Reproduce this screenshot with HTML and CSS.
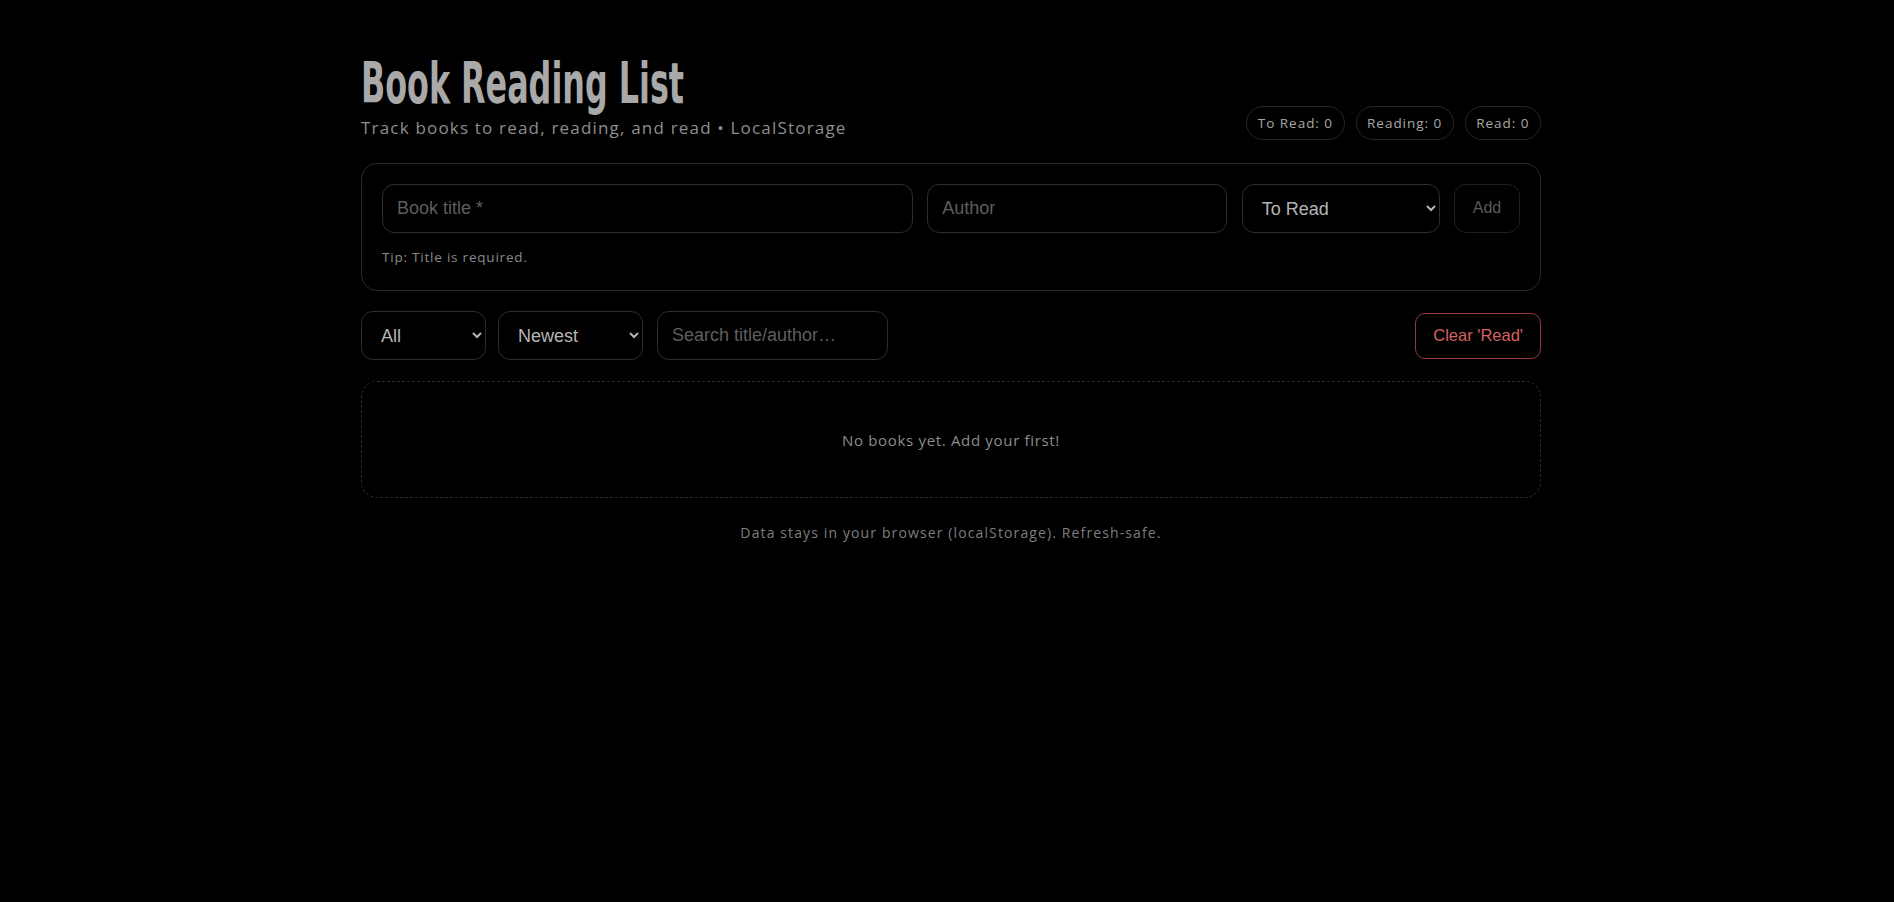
FILE: index.html
```html
<!DOCTYPE html>
<html lang="en">
<head>
<meta charset="utf-8">
<title>Book Reading List</title>
<link rel="stylesheet" href="styles.css">
</head>
<body>
<main class="wrap">
  <header class="top">
    <div class="brand">
      <h1 class="title">Book Reading List</h1>
      <p class="sub">Track books to read, reading, and read • LocalStorage</p>
    </div>
    <div class="stats">
      <span class="pill">To Read: 0</span>
      <span class="pill">Reading: 0</span>
      <span class="pill">Read: 0</span>
    </div>
  </header>

  <section class="card">
    <form class="addrow">
      <input class="field" type="text" placeholder="Book title *">
      <input class="field" type="text" placeholder="Author">
      <select class="field sel">
        <option>To Read</option>
        <option>Reading</option>
        <option>Read</option>
      </select>
      <button class="addbtn" type="button">Add</button>
    </form>
    <p class="tip">Tip: Title is required.</p>
  </section>

  <section class="filters">
    <select class="field sel f-all">
      <option>All</option>
    </select>
    <select class="field sel f-sort">
      <option>Newest</option>
    </select>
    <input class="field f-search" type="text" placeholder="Search title/author…">
    <button class="clear" type="button">Clear 'Read'</button>
  </section>

  <section class="empty">No books yet. Add your first!</section>

  <p class="foot">Data stays in your browser (localStorage). Refresh-safe.</p>
</main>
</body>
</html>
```

FILE: styles.css
```css
html, body {
  margin: 0;
  background: #000;
  color-scheme: dark;
}
body {
  padding-left: 8px;
  font-family: "Open Sans", "Noto Sans", sans-serif;
  color: #aaa;
}
.wrap {
  width: 1180px;
  margin: 0 auto;
  padding-top: 55px;
}
.top {
  display: flex;
  justify-content: space-between;
  align-items: flex-end;
}
.title {
  margin: 0;
  font-family: "Liberation Sans Narrow", "DejaVu Sans Condensed", sans-serif;
  font-weight: 700;
  font-size: 57px;
  line-height: 1;
  color: #a9a9a9;
  display: inline-block;
  transform: scaleX(0.62);
  transform-origin: left center;
  white-space: nowrap;
}
.sub {
  margin: 4px 0 0;
  font-size: 17px;
  line-height: 24px;
  letter-spacing: 0.07em;
  color: #8e8e8e;
}
.stats {
  display: flex;
  gap: 11px;
  margin-bottom: 0;
}
.pill {
  display: inline-flex;
  align-items: center;
  height: 34px;
  box-sizing: border-box;
  padding: 0 10.5px;
  border: 1px solid #262626;
  border-radius: 999px;
  font-size: 13.5px;
  letter-spacing: 0.072em;
  color: #a8a8a8;
}
.card {
  margin-top: 23px;
  border: 1px solid #2a2a2a;
  border-radius: 16px;
  padding: 20px 20px 24px;
}
.addrow {
  display: grid;
  grid-template-columns: 531px 300px 198px 66px;
  justify-content: space-between;
  margin: 0;
}
.field {
  height: 49px;
  box-sizing: border-box;
  background: #000;
  border: 1px solid #2e2e2e;
  border-radius: 12px;
  padding: 0 14px;
  font-family: "Liberation Sans", Arial, sans-serif;
  font-size: 18px;
  color: #b5b5b5;
  outline: none;
}
.field::placeholder {
  color: #5e5e5e;
}
.sel {
  padding-left: 15px;
}
.addbtn {
  height: 49px;
  padding-bottom: 2px;
  background: #000;
  border: 1px solid #1f1f1f;
  border-radius: 12px;
  font-family: "Liberation Sans", Arial, sans-serif;
  font-size: 16px;
  color: #5a5a5a;
}
.tip {
  margin: 15px 0 0;
  font-size: 13.5px;
  letter-spacing: 0.058em;
  color: #8a8a8a;
}
.filters {
  display: flex;
  align-items: center;
  gap: 12px;
  margin-top: 20px;
}
.f-all { width: 125px; }
.f-sort { width: 145px; }
.f-search { width: 231px; margin-left: 2px; }
.clear {
  margin-left: auto;
  height: 46px;
  padding: 0 17px;
  background: #000;
  border: 1px solid #9a3a3a;
  border-radius: 10px;
  font-family: "Liberation Sans", Arial, sans-serif;
  font-size: 16.5px;
  color: #d96060;
}
.empty {
  margin-top: 21px;
  height: 117px;
  box-sizing: border-box;
  border: 1px dashed #2a2a2a;
  border-radius: 16px;
  display: flex;
  align-items: center;
  justify-content: center;
  font-size: 15px;
  letter-spacing: 0.045em;
  color: #8c8c8c;
}
.foot {
  margin: 25px 0 0;
  text-align: center;
  font-size: 14px;
  letter-spacing: 0.08em;
  color: #7e7e7e;
}
```
